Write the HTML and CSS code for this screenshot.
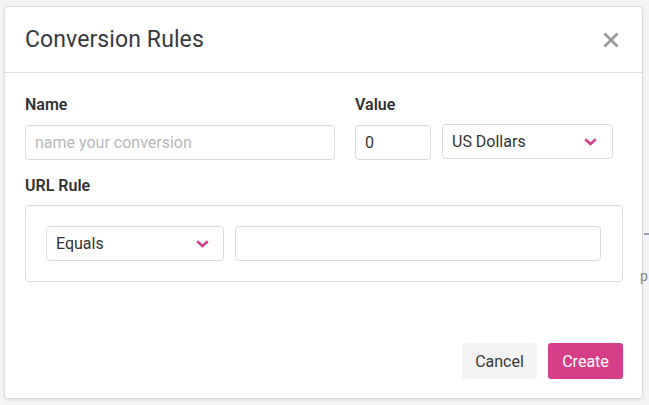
FILE: index.html
```html
<!DOCTYPE html>
<html>
<head>
<meta charset="utf-8">
<link rel="stylesheet" href="styles.css">
</head>
<body>
<div class="stage">
  <div class="modal">
    <div class="modal-header">
      <h1 class="title">Conversion Rules</h1>
      <button class="close" aria-label="Close">
        <svg width="16" height="16" viewBox="0 0 16 16"><path d="M1.5 1.5 L14.5 14.5 M14.5 1.5 L1.5 14.5" stroke="#999" stroke-width="2.8" stroke-linecap="butt" fill="none"/></svg>
      </button>
    </div>
    <div class="modal-body">
      <div class="row">
        <div class="col-name">
          <label class="label">Name</label>
          <div class="input placeholder name-input">name your conversion</div>
        </div>
        <div class="col-value">
          <label class="label">Value</label>
          <div class="value-row">
            <div class="input value-input">0</div>
            <div class="select currency">
              <span>US Dollars</span>
              <svg class="chev" width="13" height="8" viewBox="0 0 13 8"><path d="M1.2 1.2 L6.5 6 L11.8 1.2" stroke="#d63f88" stroke-width="2.5" fill="none"/></svg>
            </div>
          </div>
        </div>
      </div>
      <label class="label url-label">URL Rule</label>
      <div class="rule-box">
        <div class="select equals">
          <span>Equals</span>
          <svg class="chev" width="13" height="8" viewBox="0 0 13 8"><path d="M1.2 1.2 L6.5 6 L11.8 1.2" stroke="#d63f88" stroke-width="2.5" fill="none"/></svg>
        </div>
        <div class="input rule-input"></div>
      </div>
    </div>
    <div class="modal-footer">
      <button class="btn btn-cancel">Cancel</button>
      <button class="btn btn-create">Create</button>
    </div>
  </div>
  <div class="behind">
    <div class="behind-line"></div>
    <div class="behind-text">p</div>
  </div>
</div>
</body>
</html>
```
FILE: styles.css
```css
* { box-sizing: border-box; }
html, body { margin: 0; padding: 0; }
body {
  background: #f3f4f5;
  font-family: Roboto, "Liberation Sans", Arial, sans-serif;
  color: #333;
  width: 649px;
  height: 405px;
  overflow: hidden;
}
.stage {
  display: flex;
  align-items: flex-start;
  height: 405px;
}
.modal {
  margin: 6px 0 0 4px;
  width: 639px;
  height: 393px;
  background: #fff;
  border: 1px solid #dcdcdc;
  border-radius: 4px;
  box-shadow: 0 1px 3px rgba(0,0,0,0.08);
  display: flex;
  flex-direction: column;
  flex-shrink: 0;
}
.modal-header {
  height: 66px;
  border-bottom: 1px solid #dedede;
  display: flex;
  align-items: center;
  justify-content: space-between;
  padding: 0 23px 0 20px;
}
.title {
  margin: 0;
  font-size: 23px;
  font-weight: 400;
  color: #363a3f;
  letter-spacing: 0.1px;
}
.close {
  border: 0;
  background: none;
  padding: 0;
  width: 16px;
  height: 16px;
  display: flex;
}
.modal-body {
  flex: 1;
  padding: 22px 19px 0 20px;
}
.row {
  display: flex;
  gap: 20px;
}
.label {
  display: block;
  font-size: 16px;
  font-weight: 600;
  line-height: 20px;
  margin-bottom: 10px;
  color: #333;
}
.col-name { width: 310px; }
.value-row { display: flex; gap: 11px; }
.input, .select {
  height: 35px;
  border: 1px solid #dbdbdb;
  border-radius: 4px;
  background: #fff;
  font-size: 16px;
  display: flex;
  align-items: center;
  padding: 0 9px;
  color: #333;
}
.placeholder { color: #b8b8b8; }
.name-input { width: 310px; }
.value-input { width: 76px; }
.currency { width: 171px; justify-content: space-between; padding-right: 15px; margin-top: -1px; }
.url-label { margin-top: 16px; margin-bottom: 9px; }
.rule-box {
  border: 1px solid #dbdbdb;
  border-radius: 4px;
  height: 77px;
  padding: 20px 21px 20px 20px;
  display: flex;
  gap: 11px;
}
.equals { width: 178px; justify-content: space-between; padding-right: 14px; }
.rule-input { flex: 1; }
.chev { display: block; }
.modal-footer {
  display: flex;
  justify-content: flex-end;
  gap: 11px;
  padding: 0 19px 19px 0;
}
.btn {
  width: 75px;
  height: 36px;
  border: 0;
  border-radius: 3px;
  font-family: inherit;
  font-size: 16px;
  padding: 0;
}
.btn-cancel { background: #f3f3f3; color: #3a3a3a; }
.btn-create { background: #d63f88; color: #fff; }
.behind {
  flex: 1;
  height: 405px;
  display: flex;
  flex-direction: column;
}
.behind-line {
  margin-top: 233px;
  margin-left: 1px;
  height: 2px;
  background: #9aa3b5;
}
.behind-text {
  margin-top: 33px;
  font-size: 14px;
  color: #888;
  margin-left: -3px;
}
```
